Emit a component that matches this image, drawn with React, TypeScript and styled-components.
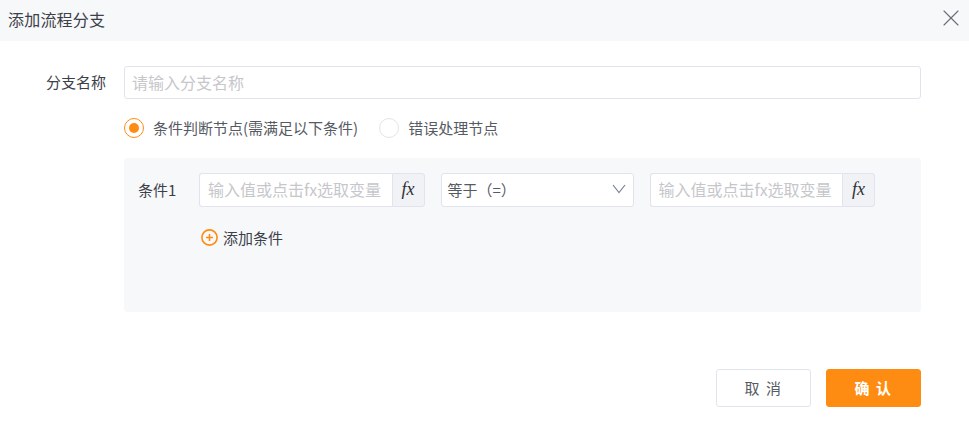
import styled, { createGlobalStyle } from 'styled-components';
import { X } from 'lucide-react';

const GlobalStyle = createGlobalStyle`
  * {
    box-sizing: border-box;
  }

  body {
    margin: 0;
    background: #fff;
    font-family: 'Noto Sans CJK SC', 'Liberation Sans', sans-serif;
  }

  input {
    font-family: inherit;
  }

  input::placeholder {
    color: #c6c7cb;
    opacity: 1;
  }
`;

const Dialog = styled.div`
  width: 969px;
  height: 422px;
  display: flex;
  flex-direction: column;
  overflow: hidden;
`;

const Header = styled.div`
  height: 41px;
  flex: none;
  display: flex;
  align-items: center;
  justify-content: space-between;
  padding: 0 4px 5px 8px;
  background: #f7f8fa;
`;

const Title = styled.div`
  margin-top: 2px;
  font-size: 16px;
  letter-spacing: 0.2px;
  color: #3c4048;
`;

const CloseButton = styled.button`
  display: flex;
  padding: 0;
  border: none;
  background: none;
  color: #6d7078;
`;

const Body = styled.div`
  flex: 1;
  padding: 25px 48px 0 0;
`;

const FormRow = styled.div`
  display: flex;
`;

const Label = styled.div`
  width: 106px;
  height: 33px;
  flex: none;
  margin-right: 18px;
  text-align: right;
  font-size: 15px;
  line-height: 31px;
  color: #3c4048;
`;

const Content = styled.div`
  flex: 1;
  min-width: 0;
`;

const NameInput = styled.input`
  display: block;
  width: 100%;
  height: 33px;
  padding: 0 7px 2px;
  border: 1px solid #e1e4ee;
  border-radius: 3px;
  outline: none;
  font-size: 16px;
  color: #3c4048;
`;

const RadioGroup = styled.div`
  display: flex;
  align-items: center;
  height: 20px;
  margin-top: 19px;
`;

const RadioItem = styled.label`
  display: flex;
  align-items: center;
  margin-right: 21px;
  font-size: 15px;
  color: #565a63;
`;

const RadioText = styled.span`
  padding-bottom: 2px;
`;

const RadioCircle = styled.span<{ checked?: boolean }>`
  width: 20px;
  height: 20px;
  margin-right: 9px;
  display: flex;
  align-items: center;
  justify-content: center;
  border: 1px solid ${props => (props.checked ? '#ff8c12' : '#e2e4ea')};
  border-radius: 50%;

  &::after {
    content: '';
    display: ${props => (props.checked ? 'block' : 'none')};
    width: 10px;
    height: 10px;
    border-radius: 50%;
    background: #ff8c12;
  }
`;

const ConditionPanel = styled.div`
  height: 154px;
  margin-top: 20px;
  padding: 15px 14px;
  background: #f7f8fa;
  border-radius: 4px;
`;

const ConditionRow = styled.div`
  display: flex;
  align-items: center;
  gap: 16px;
`;

const ConditionLabel = styled.div`
  width: 45px;
  padding-bottom: 2px;
  font-size: 15px;
  color: #3c4048;
`;

const ValueInput = styled.div`
  display: flex;
  width: 225.5px;
  height: 34px;
`;

const ValueField = styled.input`
  flex: 1;
  min-width: 0;
  padding: 0 0 2px 8px;
  border: 1px solid #e1e4ee;
  border-right: none;
  border-radius: 3px 0 0 3px;
  outline: none;
  font-size: 16px;
  background: #fff;
`;

const FxButton = styled.div`
  width: 33px;
  flex: none;
  display: flex;
  align-items: center;
  justify-content: center;
  padding-bottom: 2px;
  border: 1px solid #e1e4ee;
  border-radius: 0 3px 3px 0;
  background: #f0f2f5;
  font-family: 'Liberation Serif', serif;
  font-style: italic;
  font-size: 18px;
  color: #2e3036;
`;

const Select = styled.div`
  width: 193px;
  height: 34px;
  display: flex;
  align-items: center;
  justify-content: space-between;
  padding: 0 7px 2px 6px;
  border: 1px solid #e1e4ee;
  border-radius: 3px;
  background: #fff;
  font-size: 15px;
  color: #565a63;
`;

const AddCondition = styled.div`
  display: flex;
  align-items: center;
  gap: 5px;
  margin: 20px 0 0 63px;
  font-size: 15px;
  color: #3c4048;
`;

const Footer = styled.div`
  display: flex;
  justify-content: flex-end;
  gap: 15px;
  margin-top: 57px;
`;

const Button = styled.button<{ primary?: boolean }>`
  width: 95px;
  height: 38px;
  padding: 0 0 2px;
  border: 1px solid ${props => (props.primary ? '#ff8c12' : '#e2e4ec')};
  border-radius: 3px;
  background: ${props => (props.primary ? '#ff8c12' : '#fff')};
  color: ${props => (props.primary ? '#fff' : '#565a63')};
  font-family: inherit;
  font-size: 15px;
  letter-spacing: 1.5px;
  font-weight: ${props => (props.primary ? 700 : 400)};
`;

const AddIcon = () => (
  <svg width="17" height="17" viewBox="0 0 17 17" fill="none" stroke="#ff8c12">
    <circle cx="8.5" cy="8.5" r="7.6" strokeWidth="1.6" />
    <path d="M8.5 5v7M5 8.5h7" strokeWidth="1.6" />
  </svg>
);

const SelectArrow = () => (
  <svg width="14" height="10" viewBox="0 0 14 10" fill="none" stroke="#7b8198" strokeWidth="1.2">
    <path d="M1 1l6 7.6L13 1" />
  </svg>
);

const ConditionValue = () => (
  <ValueInput>
    <ValueField placeholder="输入值或点击fx选取变量" />
    <FxButton>fx</FxButton>
  </ValueInput>
);

const App = () => (
  <Dialog>
    <GlobalStyle />
    <Header>
      <Title>添加流程分支</Title>
      <CloseButton>
        <X size={28} strokeWidth={1} />
      </CloseButton>
    </Header>
    <Body>
      <FormRow>
        <Label>分支名称</Label>
        <Content>
          <NameInput placeholder="请输入分支名称" />
          <RadioGroup>
            <RadioItem>
              <RadioCircle checked />
              <RadioText>条件判断节点(需满足以下条件)</RadioText>
            </RadioItem>
            <RadioItem>
              <RadioCircle />
              <RadioText>错误处理节点</RadioText>
            </RadioItem>
          </RadioGroup>
          <ConditionPanel>
            <ConditionRow>
              <ConditionLabel>条件1</ConditionLabel>
              <ConditionValue />
              <Select>
                等于（=）
                <SelectArrow />
              </Select>
              <ConditionValue />
            </ConditionRow>
            <AddCondition>
              <AddIcon />
              添加条件
            </AddCondition>
          </ConditionPanel>
          <Footer>
            <Button>取 消</Button>
            <Button primary>确 认</Button>
          </Footer>
        </Content>
      </FormRow>
    </Body>
  </Dialog>
);

export default App;
